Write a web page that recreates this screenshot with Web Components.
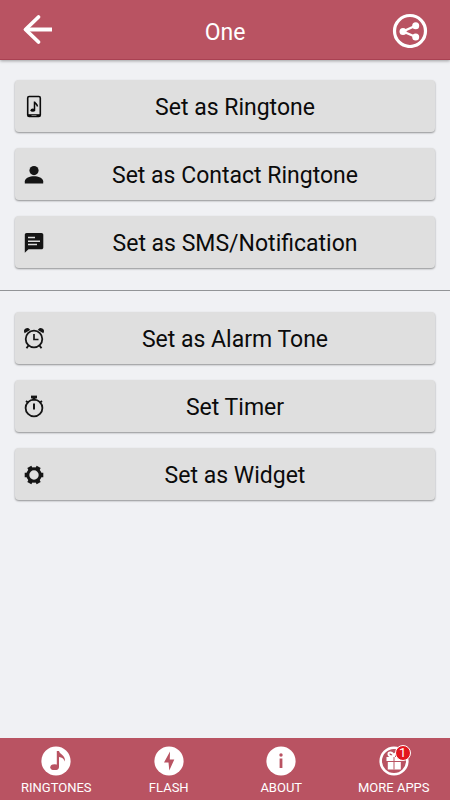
<!DOCTYPE html>
<html lang="en">
<head>
<meta charset="utf-8">
<meta name="viewport" content="width=device-width, initial-scale=1">
<title>One</title>
<style>
  body {
    margin: 0;
    font-family: Roboto, "Liberation Sans", sans-serif;
    background: #f0f1f4;
    --bar: #b95362;
  }
</style>
</head>
<body>
<ringtone-app>
  <app-header slot="header" heading="One"></app-header>

  <action-group>
    <action-button label="Set as Ringtone">
      <svg slot="icon" viewBox="0 0 24 24" width="24" height="24" fill="none" stroke="#0b0b0b">
        <rect x="5.700" y="1.500" width="12.600" height="20" rx="1.500" stroke-width="1.600"/>
        <path d="M6 20.300H18" stroke-width="2.200"/>
        <path d="M9.500 20.500h5" stroke="#777" stroke-width="1"/>
        <path d="M12.500 15V6.500c.3 2.200 3 2.200 2.900 5" stroke-width="1.500"/>
        <ellipse cx="10.800" cy="15.200" rx="2.300" ry="1.600" fill="#0b0b0b" stroke="none"/>
      </svg>
    </action-button>
    <action-button label="Set as Contact Ringtone">
      <svg slot="icon" viewBox="0 0 24 24" width="24" height="24" fill="#151515">
        <circle cx="12" cy="7.600" r="4.600"/>
        <path d="M2.800 20.500v-2.300c0-3.100 5-5 9.200-5s9.200 1.900 9.200 5v2.300z"/>
      </svg>
    </action-button>
    <action-button label="Set as SMS/Notification">
      <svg slot="icon" viewBox="0 0 24 24" width="24" height="24">
        <path fill="#151515" d="M4.600 2h14.900c1 0 1.800.8 1.800 1.800v12.700c0 1-.8 1.800-1.800 1.800H6.500l-3.700 3.400V3.800c0-1 .8-1.800 1.800-1.800z"/>
        <path stroke="#dedede" stroke-width="1.500" d="M6 6.500h7M6 10.200h12M6 13.500h9"/>
      </svg>
    </action-button>
  </action-group>

  <section-divider></section-divider>

  <action-group>
    <action-button label="Set as Alarm Tone">
      <svg slot="icon" viewBox="0 0 24 24" width="24" height="24" fill="none" stroke="#151515">
        <circle cx="12" cy="12" r="8.300" stroke-width="1.800"/>
        <path d="M12 7v5.500h4.500" stroke-width="1.700"/>
        <path d="M3 5a2.300 2.300 0 0 1 4-2.200zM21 5a2.300 2.300 0 0 0-4-2.200z" fill="#151515" stroke-width="1.600"/>
        <path d="M6.500 18.500l-2 2.800M17.500 18.500l2 2.800" stroke-width="1.900"/>
      </svg>
    </action-button>
    <action-button label="Set Timer">
      <svg slot="icon" viewBox="0 0 24 24" width="24" height="24" fill="none" stroke="#151515">
        <circle cx="12" cy="13" r="8.400" stroke-width="1.800"/>
        <path d="M12 8.500v6" stroke-width="2"/>
        <path d="M9 2h6" stroke-width="2.800"/>
        <path d="M12 3v2.500" stroke-width="3"/>
        <path d="M4 6l2.500 2M20 6l-2.500 2" stroke-width="1.800"/>
      </svg>
    </action-button>
    <action-button label="Set as Widget">
      <svg slot="icon" viewBox="0 0 24 24" width="24" height="24" fill="none" stroke="#151515">
        <circle cx="12" cy="12" r="6.200" stroke-width="3"/>
        <path d="M18.300 12h3M2.700 12h3M15.200 17.500l1.500 2.600M7.300 3.900l1.500 2.600M8.800 17.500l-1.500 2.600M16.700 3.900l-1.500 2.600" stroke-width="4.600"/>
      </svg>
    </action-button>
  </action-group>

  <nav-bar slot="footer">
    <nav-item label="RINGTONES">
      <svg slot="icon" viewBox="0 0 30 30" width="30" height="30">
        <circle cx="15" cy="15" r="14.600" fill="#fff"/>
        <path d="M15.800 5H18c.8 3.700 6.300 3.500 6 10.500-1.200-2.800-3-4.300-6-4.500V21h-2.200z" fill="#b95362"/>
        <ellipse cx="13.600" cy="21.200" rx="4.300" ry="2.900" fill="#b95362"/>
      </svg>
    </nav-item>
    <nav-item label="FLASH">
      <svg slot="icon" viewBox="0 0 30 30" width="30" height="30">
        <circle cx="15" cy="15" r="14.600" fill="#fff"/>
        <path d="M16 5.500L10 16.500h4.500L15.300 24.500 20.300 13.500h-4.500z" fill="#b95362"/>
      </svg>
    </nav-item>
    <nav-item label="ABOUT">
      <svg slot="icon" viewBox="0 0 30 30" width="30" height="30">
        <circle cx="15" cy="15" r="14.600" fill="#fff"/>
        <circle cx="15" cy="9" r="1.700" fill="#b95362"/>
        <path d="M15 12.500V22" stroke="#b95362" stroke-width="2.800"/>
      </svg>
    </nav-item>
    <nav-item label="MORE APPS" count="1">
      <svg slot="icon" viewBox="0 0 30 30" width="30" height="30" fill="none" stroke="#fff">
        <circle cx="15" cy="15" r="13.300" stroke-width="2.600"/>
        <path d="M7.500 11H23v4H7.500zM8.800 16h13v7.500h-13z" fill="#fff" stroke="none"/>
        <path d="M15 10.500c-1-5-6-5-5.500-2 .3 1.800 3 2 5.500 2 0-4 4.500-5 5-2" stroke-width="2"/>
        <path d="M15 11v12.500M8 15.500h14.500" stroke="#b95362" stroke-width="1"/>
      </svg>
    </nav-item>
  </nav-bar>
</ringtone-app>

<template id="ringtone-app">
  <style>
    :host {
      display: flex;
      flex-direction: column;
      min-height: 100vh;
    }
    main {
      flex: 1;
      padding-top: 20px;
    }
  </style>
  <slot name="header"></slot>
  <main><slot></slot></main>
  <slot name="footer"></slot>
</template>

<template id="app-header">
  <style>
    :host {
      display: block;
      background: var(--bar);
      color: #fff;
      box-shadow: 0 1px 3px rgba(0, 0, 0, .35);
    }
    header {
      display: flex;
      align-items: center;
      justify-content: space-between;
      height: 60px;
      padding: 0 20px;
      box-sizing: border-box;
      border-bottom: 1px solid #a94152;
    }
    h1 {
      margin: 0;
      padding-top: 6px;
      font-size: 23px;
      font-weight: 400;
      line-height: 28px;
    }
    button {
      display: flex;
      padding: 0;
      border: 0;
      background: none;
      color: inherit;
    }
  </style>
  <header>
    <button type="button" aria-label="Back">
      <svg viewBox="0 0 40 36" width="40" height="36" fill="none" stroke="#fff" stroke-width="4">
        <path d="M32 17.500H6"/>
        <path d="M18.500 5L5.500 17.500l13 12.500" stroke-linecap="round" stroke-linejoin="round" stroke-width="3.800"/>
      </svg>
    </button>
    <h1></h1>
    <button type="button" aria-label="Share">
      <svg viewBox="0 0 40 36" width="40" height="36" fill="none" stroke="#fff">
        <circle cx="20" cy="19" r="15.500" stroke-width="3.200"/>
        <path d="M26 13.500L13 19.500l13 5.500" stroke-width="2.400"/>
        <g fill="#fff" stroke="none">
          <circle cx="25.700" cy="13.800" r="3.500"/>
          <circle cx="13" cy="19.500" r="3.500"/>
          <circle cx="25.700" cy="25" r="3.500"/>
        </g>
      </svg>
    </button>
  </header>
</template>

<template id="action-group">
  <style>
    :host {
      display: flex;
      flex-direction: column;
      gap: 16px;
      padding: 0 15px;
    }
  </style>
  <slot></slot>
</template>

<template id="action-button">
  <style>
    :host {
      display: block;
    }
    button {
      display: flex;
      align-items: center;
      width: 100%;
      height: 52px;
      padding: 2px 0 0 7px;
      border: 0;
      border-radius: 4px;
      background: #dfdfdf;
      box-shadow: 0 1px 2px rgba(0, 0, 0, .4);
      color: #0b0b0b;
      font: 400 23px/28px Roboto, "Liberation Sans", sans-serif;
    }
    span {
      flex: 1;
      padding: 2px 11px 0 0;
    }
  </style>
  <button type="button"><slot name="icon"></slot><span></span></button>
</template>

<template id="section-divider">
  <style>
    :host {
      display: block;
    }
    hr {
      margin: 22px 0 21px;
      border: 0;
      border-top: 1px solid #929497;
    }
  </style>
  <hr>
</template>

<template id="nav-bar">
  <style>
    :host {
      display: block;
      background: var(--bar);
    }
    nav {
      display: grid;
      grid-template-columns: repeat(4, 1fr);
    }
  </style>
  <nav><slot></slot></nav>
</template>

<template id="nav-item">
  <style>
    :host {
      display: block;
    }
    a {
      display: flex;
      flex-direction: column;
      align-items: center;
      gap: 4px;
      padding: 8px 0 4px;
      color: #fff;
      font-size: 13px;
      line-height: 16px;
      text-decoration: none;
    }
    .icon {
      position: relative;
      display: flex;
    }
    .badge {
      position: absolute;
      top: -1px;
      right: -2px;
      width: 14px;
      height: 14px;
      border: 1px solid #fff;
      border-radius: 50%;
      background: #e3161d;
      font-size: 13px;
      line-height: 14px;
      text-align: center;
    }
    .badge:empty {
      display: none;
    }
  </style>
  <a href="#">
    <span class="icon"><slot name="icon"></slot><span class="badge"></span></span>
    <span class="label"></span>
  </a>
</template>

<script>
// Clones the template that has the same id as the tag
class BaseElement extends HTMLElement {
  constructor() {
    super()
    const template = document.getElementById(this.localName)
    this._shadowRoot = this.attachShadow({ mode: 'open' })
    this._shadowRoot.appendChild(template.content.cloneNode(true))
  }
}

class RingtoneApp extends BaseElement {}
class ActionGroup extends BaseElement {}
class SectionDivider extends BaseElement {}
class NavBar extends BaseElement {}

class AppHeader extends BaseElement {
  connectedCallback() {
    this._shadowRoot.querySelector('h1').textContent = this.getAttribute('heading')
  }
}

class ActionButton extends BaseElement {
  connectedCallback() {
    this._shadowRoot.querySelector('button > span').textContent = this.getAttribute('label')
  }
}

class NavItem extends BaseElement {
  connectedCallback() {
    this._shadowRoot.querySelector('.label').textContent = this.getAttribute('label')
    this._shadowRoot.querySelector('.badge').textContent = this.getAttribute('count') || ''
  }
}

customElements.define('ringtone-app', RingtoneApp)
customElements.define('app-header', AppHeader)
customElements.define('action-group', ActionGroup)
customElements.define('action-button', ActionButton)
customElements.define('section-divider', SectionDivider)
customElements.define('nav-bar', NavBar)
customElements.define('nav-item', NavItem)
</script>
</body>
</html>
